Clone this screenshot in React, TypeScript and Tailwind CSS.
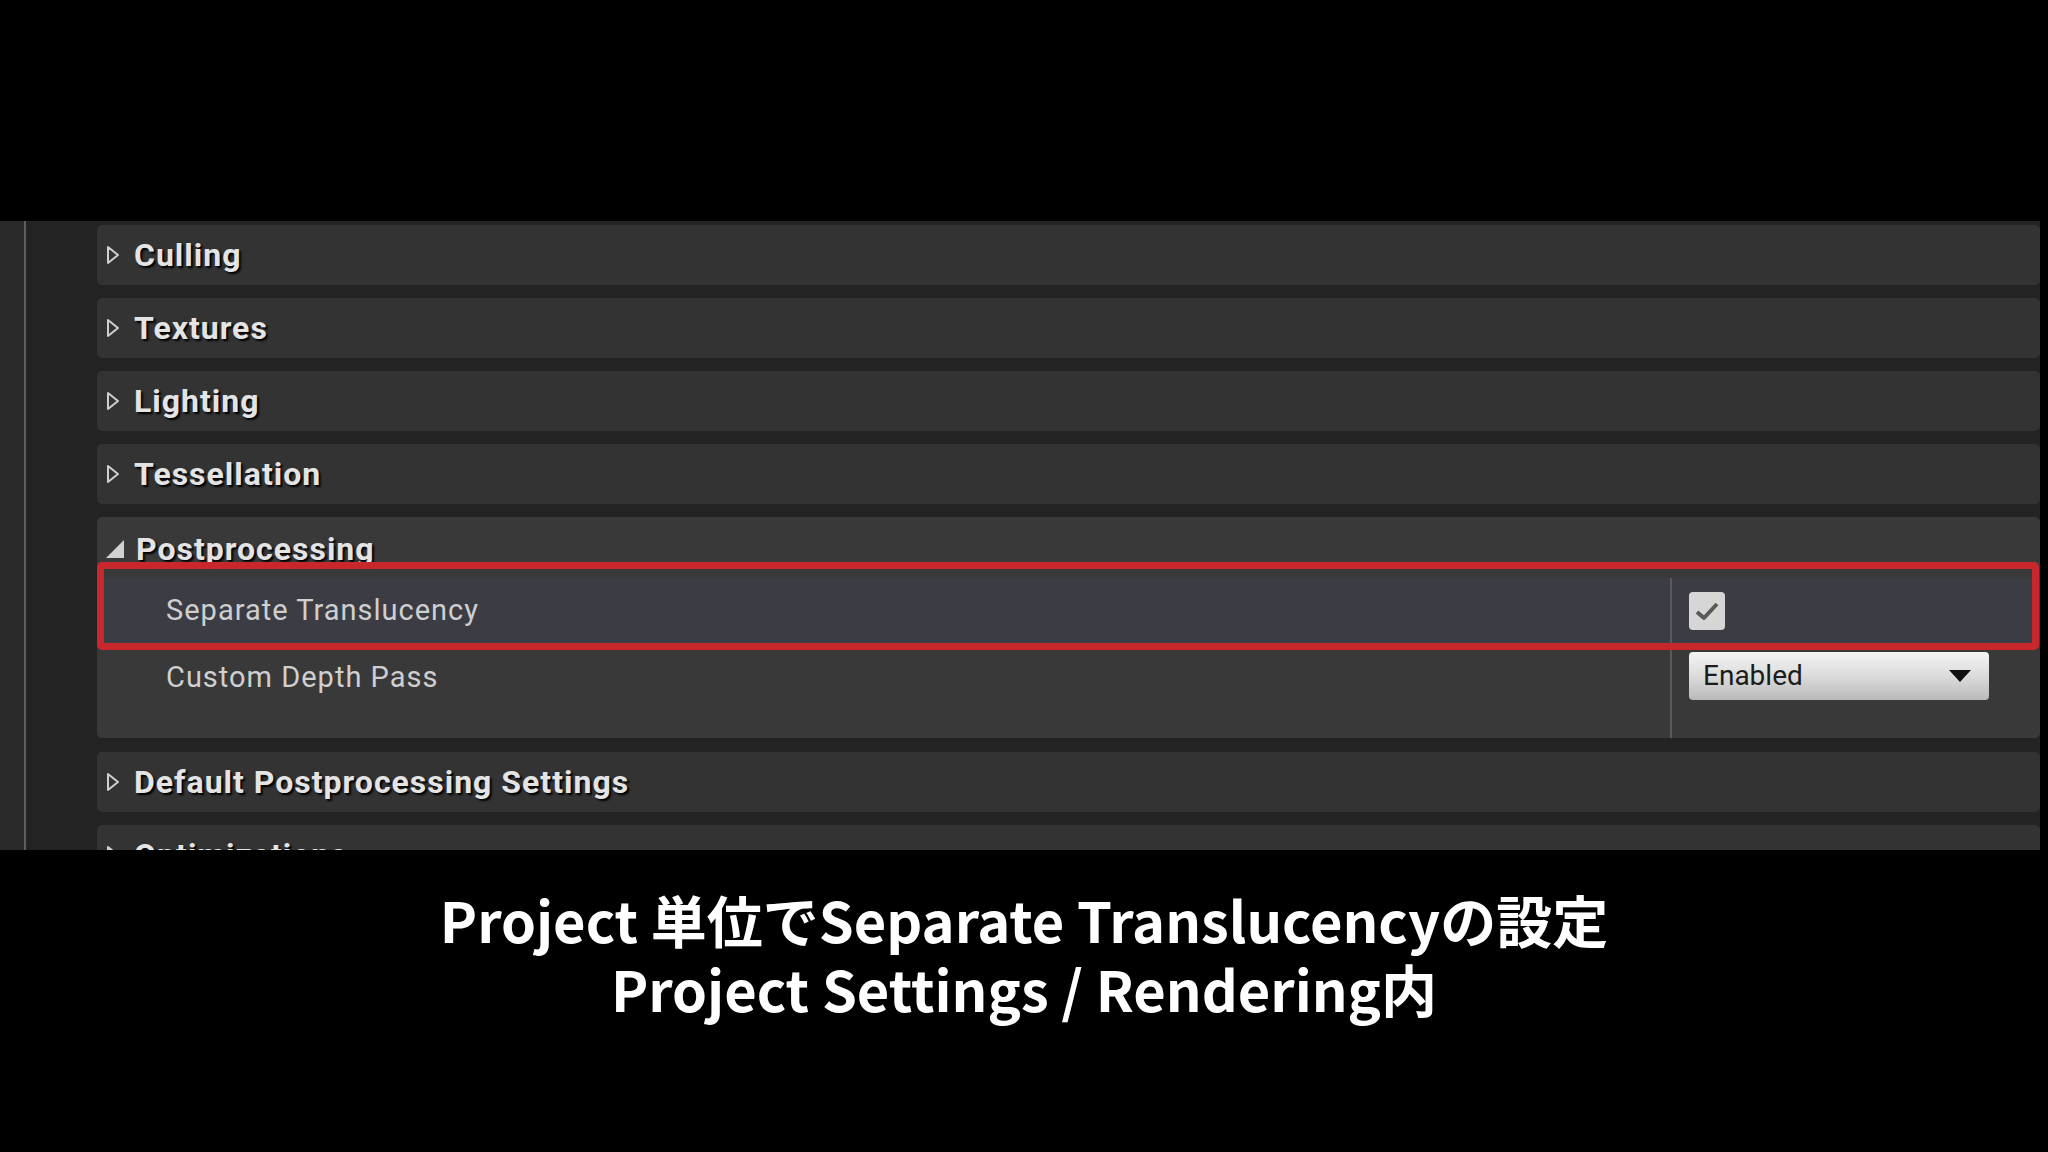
import React from 'react'

const headerText =
  "font-['Roboto',sans-serif] font-bold text-[32px] tracking-[1px] text-[#e4e4e4] [text-shadow:2px_2px_2px_#000] leading-none"

const propText = "font-['Roboto',sans-serif] text-[29px] tracking-[1px] text-[#cfcfcf]"

function CollapsedArrow() {
  return (
    <svg width="14" height="20" viewBox="0 0 14 20" className="shrink-0">
      <path d="M2 2 L12 10 L2 18 Z" fill="none" stroke="#cfcfcf" strokeWidth="2" strokeLinejoin="round" />
    </svg>
  )
}

function ExpandedArrow() {
  return (
    <svg width="20" height="20" viewBox="0 0 20 20" className="shrink-0">
      <path d="M19 1 L19 19 L1 19 Z" fill="#d2d2d2" />
    </svg>
  )
}

function Category({ title }: { title: string }) {
  return (
    <div className="h-[60px] mb-[13px] rounded-[5px] bg-[#333333] flex items-center pl-[9px] gap-[14px]">
      <CollapsedArrow />
      <span className={headerText}>{title}</span>
    </div>
  )
}

function PostprocessingGroup() {
  return (
    <div className="relative mb-[14px] rounded-[5px] bg-[#393939]">
      {/* header */}
      <div className="h-[61px] flex items-center pl-[8px] gap-[11px] pt-[2px]">
        <ExpandedArrow />
        <span className={headerText}>Postprocessing</span>
      </div>

      {/* properties */}
      <div className="grid grid-cols-[1573px_1fr]">
        <div className="h-[66px] bg-[#3c3d44] flex items-center pl-[69px]">
          <span className={propText}>Separate Translucency</span>
        </div>
        <div className="h-[66px] bg-[#3c3d44] border-l-2 border-[#5a5a5a] flex items-center pl-[17px]">
          <div className="w-[36px] h-[38px] rounded-[4px] bg-[#d6d6d6] flex items-center justify-center">
            <svg width="26" height="22" viewBox="0 0 26 22">
              <path d="M3 12 L10 18 L23 4" fill="none" stroke="#595959" strokeWidth="4" strokeLinejoin="round" />
            </svg>
          </div>
        </div>

        <div className="h-[94px] flex pl-[69px] pt-[12px]">
          <span className={propText}>Custom Depth Pass</span>
        </div>
        <div className="h-[94px] border-l-2 border-[#5a5a5a] pl-[17px] pt-[8px]">
          <div className="w-[300px] h-[48px] rounded-[4px] bg-gradient-to-b from-[#f4f4f4] via-[#dcdcdc] to-[#b9b9b9] flex items-center justify-between pl-[14px] pr-[18px]">
            <span className="font-['Roboto',sans-serif] text-[28px] text-[#1c1c1c]">Enabled</span>
            <svg width="22" height="12" viewBox="0 0 22 12">
              <path d="M0 0 L22 0 L11 12 Z" fill="#111" />
            </svg>
          </div>
        </div>
      </div>

      {/* annotation */}
      <div className="absolute left-0 top-[45px] w-[1942px] h-[88px] border-[7px] border-[#c8282c] rounded-[5px] pointer-events-none" />
    </div>
  )
}

export default function App() {
  return (
    <div className="w-[2048px] h-[1152px] bg-black flex flex-col overflow-hidden">
      <div className="h-[221px] shrink-0" />

      <div className="h-[629px] shrink-0 flex overflow-hidden">
        <div className="w-[24px] bg-[#2a2a2a]" />
        <div className="w-[2px] bg-[#5e5e5e]" />
        <div className="w-[2014px] bg-[#232323] pl-[71px] pt-[4px] overflow-hidden">
          <Category title="Culling" />
          <Category title="Textures" />
          <Category title="Lighting" />
          <Category title="Tessellation" />
          <PostprocessingGroup />
          <Category title="Default Postprocessing Settings" />
          <Category title="Optimizations" />
        </div>
        <div className="flex-1 bg-black" />
      </div>

      <div className="flex-1 flex flex-col items-center pt-[34px] font-['Noto_Sans_CJK_JP',sans-serif] font-bold text-white text-[56px] leading-[69px]">
        <p>Project 単位でSeparate Translucencyの設定</p>
        <p>Project Settings / Rendering内</p>
      </div>
    </div>
  )
}
